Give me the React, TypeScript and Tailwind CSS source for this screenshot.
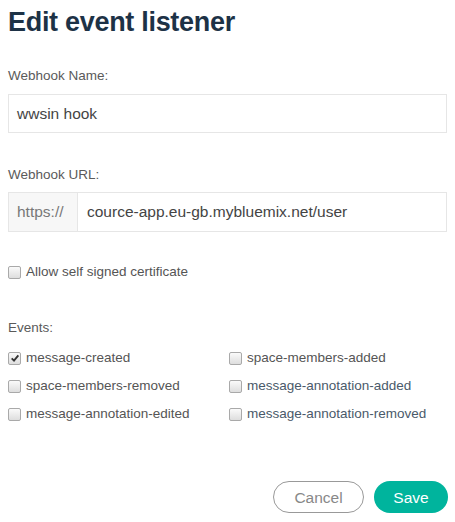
import React, { useState } from 'react';

const events = [
  ['message-created', 'space-members-added'],
  ['space-members-removed', 'message-annotation-added'],
  ['message-annotation-edited', 'message-annotation-removed'],
];

const Box: React.FC<{ checked?: boolean }> = ({ checked }) => (
  <span className="w-[13px] h-[13px] shrink-0 rounded-[2px] border border-[#a9a9a9] bg-gradient-to-b from-[#fafafa] to-[#dedede] flex items-center justify-center">
    {checked && (
      <svg viewBox="0 0 12 12" className="w-[10px] h-[10px]">
        <path d="M2 6.5 L4.8 9.2 L10 2.8" fill="none" stroke="#333" strokeWidth={2.2} />
      </svg>
    )}
  </span>
);

const App: React.FC = () => {
  const [name] = useState('wwsin hook');
  return (
    <div className="w-[455px] h-[522px] bg-white px-2 pt-[4px] font-['Liberation_Sans',Arial,sans-serif] text-[#555]">
      <h1 className="text-[27px] font-bold text-[#1d3246] leading-[36px] tracking-[-0.3px]">Edit event listener</h1>

      <div className="mt-[28px] text-[13.5px] leading-[16px] text-[#5a5a5a]">Webhook Name:</div>
      <div className="mt-[10px] h-[39px] border border-[#e6e6e6] flex items-center px-[8px] text-[15.5px] text-[#444]">{name}</div>

      <div className="mt-[34px] text-[13.5px] leading-[16px] text-[#5a5a5a]">Webhook URL:</div>
      <div className="mt-[9px] h-[40px] border border-[#e6e6e6] flex text-[15.5px]">
        <div className="w-[69px] bg-[#f7f7f7] border-r border-[#e6e6e6] flex items-center pl-[8px] text-[#777]">https://</div>
        <div className="flex items-center pl-[9px] text-[#444]">cource-app.eu-gb.mybluemix.net/user</div>
      </div>

      <label className="mt-[30px] flex items-center gap-[5px] text-[13.5px] text-[#555]">
        <Box />
        Allow self signed certificate
      </label>

      <div className="mt-[38px] text-[13.5px] leading-[16px] text-[#5a5a5a]">Events:</div>
      <div className="mt-[14px] grid grid-cols-[221px_1fr] gap-y-[12px] text-[13.5px]">
        {events.map((row, i) => (
          <React.Fragment key={i}>
            {row.map((ev) => (
              <label key={ev} className="flex items-center gap-[5px] h-[16px]">
                <Box checked={ev === 'message-created'} />
                <span className={ev.startsWith('message-annotation-a') || ev.startsWith('message-annotation-r') ? 'text-[#4a5a6a]' : 'text-[#555]'}>{ev}</span>
              </label>
            ))}
          </React.Fragment>
        ))}
      </div>

      <div className="mt-[59px] flex justify-end gap-[10px] -mr-[1px]">
        <button className="w-[91px] h-[32px] rounded-full border border-[#999] text-[15.5px] text-[#888] bg-white">Cancel</button>
        <button className="w-[74px] h-[32px] rounded-full bg-[#00b49d] text-[15.5px] text-white">Save</button>
      </div>
    </div>
  );
};

export default App;
